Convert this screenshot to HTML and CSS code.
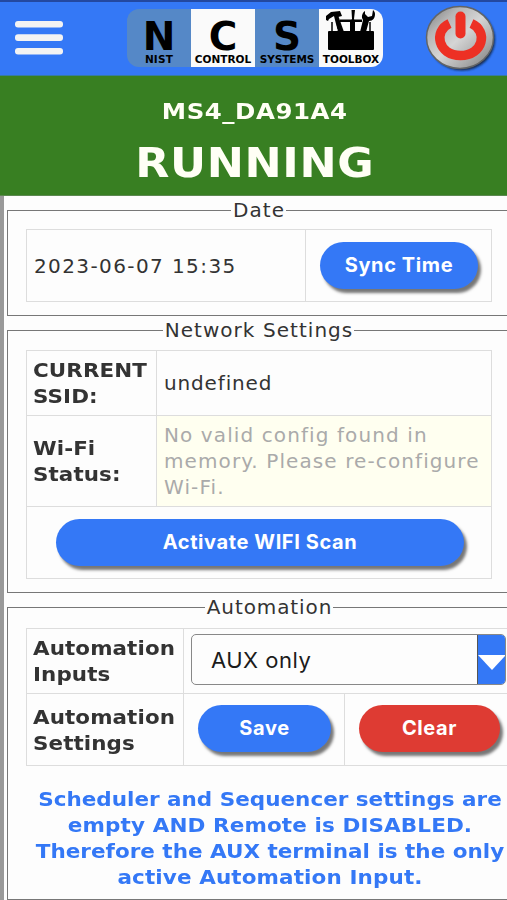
FILE: index.html
```html
<!DOCTYPE html>
<html lang="en">
<head>
<meta charset="utf-8">
<title>NCS Toolbox</title>
<link rel="stylesheet" href="styles.css">
</head>
<body>
<header class="topbar">
  <svg class="menu" width="48" height="34" viewBox="0 0 48 34" fill="#f3f3f3"><rect width="48" height="6.6" rx="3"/><rect y="13.3" width="48" height="6.6" rx="3"/><rect y="27" width="48" height="6.6" rx="3"/></svg>
  <div class="logo">
    <div class="tile"><b class="n">N</b><span class="nist">NIST</span></div>
    <div class="tile light"><b class="c">C</b><span class="control">CONTROL</span></div>
    <div class="tile"><b class="s">S</b><span class="systems">SYSTEMS</span></div>
    <div class="tile light">
      <svg class="tools" width="50" height="42" viewBox="0 0 50 42">
        <path d="M3 21h44q1 0 1 1v17q0 1-1 1H3q-1 0-1-1V22q0-1 1-1z"/>
        <path d="M6 22V12M44 22V12" stroke="#000" stroke-width="1.500"/>
        <path d="M14 9.500h22v2.500H14z"/>
        <path d="M8 6l4-1 6 17h-6z"/>
        <path d="M0 6l5-4 9-1 2 5-4 1-4-1-5 3-1 2-2-1z"/>
        <path d="M25.500 0h3.500l-1 9 1 3v10h-5V12l2-3z"/>
        <path d="M39 1c-3 2-4 6-2 9l-3 12h6l3-11c4 0 6-3 6-7 0-2-1-3-2-4l-1 6-4 1-3-3z"/>
        <path d="M11 20l-2.500-7M34.500 12l-2.500 8" stroke="#fafafa" stroke-width="1"/>
      </svg>
      <span class="toolbox">TOOLBOX</span>
    </div>
  </div>
  <svg class="power" width="74" height="68" viewBox="0 0 74 68">
    <defs><linearGradient id="metal" x1="0" y1="0" x2="1" y2="1"><stop offset="0" stop-color="#777"/><stop offset=".25" stop-color="#b5b5b5"/><stop offset=".5" stop-color="#d5d5d5"/><stop offset=".75" stop-color="#aaa"/><stop offset="1" stop-color="#777"/></linearGradient>
    <filter id="soft" x="-20%" y="-20%" width="140%" height="140%"><feGaussianBlur stdDeviation="1"/></filter></defs>
    <ellipse cx="37" cy="35.500" rx="33" ry="31" fill="#122c50" filter="url(#soft)"/>
    <ellipse cx="35" cy="33.500" rx="33.500" ry="31" fill="url(#metal)" stroke="#626466" stroke-width="1.500"/>
    <path d="M24.500 19.500C8 27 13 51.500 35.500 51.500s28-24.500 11-32" fill="none" stroke="#ed3024" stroke-width="9.500"/>
    <path d="M35.500 12.500v17" stroke="#ed3024" stroke-width="10" stroke-linecap="round"/>
  </svg>
</header>
<section class="status">
  <div class="device"><span class="wide">MS4_DA91A4</span></div>
  <div class="state"><span class="wide">RUNNING</span></div>
</section>
<main>
  <fieldset class="date">
    <legend>Date</legend>
    <table>
      <tr class="r-btn"><td class="w-date">2023-06-07 15:35</td><td class="act"><button class="sync">Sync Time</button></td></tr>
    </table>
  </fieldset>
  <fieldset class="network">
    <legend>Network Settings</legend>
    <table>
      <tr class="r-ssid"><th><span>CURRENT<br>SSID:</span></th><td class="ssid">undefined</td></tr>
      <tr class="r-wifi"><th><span>Wi-Fi<br>Status:</span></th><td class="notice">No valid config found in<br>memory. Please re-configure<br>Wi-Fi.</td></tr>
      <tr class="r-btn"><td colspan="2" class="act"><button class="scan">Activate WIFI Scan</button></td></tr>
    </table>
  </fieldset>
  <fieldset class="automation">
    <legend>Automation</legend>
    <table>
      <colgroup><col class="c-label"><col class="c-save"><col></colgroup>
      <tr class="r-ssid"><th><span>Automation<br>Inputs</span></th><td colspan="2" class="pick"><div class="select"><span>AUX only</span><i><svg width="28" height="15" viewBox="0 0 28 15"><path d="M0 0h28L14 15z" fill="#fff"/></svg></i></div></td></tr>
      <tr class="r-btn"><th><span>Automation<br>Settings</span></th><td class="act"><button class="save">Save</button></td><td class="act"><button class="clear">Clear</button></td></tr>
    </table>
    <p class="message">Scheduler and Sequencer settings are<br><span class="loose">empty AND Remote is DISABLED.</span><br>Therefore the AUX terminal is the only<br><span class="loose">active Automation Input.</span></p>
  </fieldset>
</main>
</body>
</html>
```
FILE: styles.css
```css
* { box-sizing: border-box; }
html { overflow: hidden; }
body { margin: 0; width: 507px; height: 900px; overflow: hidden; background: #fdfdfd; color: #333; font: 20px/26px "DejaVu Sans", sans-serif; letter-spacing: 1.4px; }
.topbar { height: 76px; background: #3478f6; border-top: 2px solid #2348a0; border-bottom: 1px solid #367ca0; display: flex; align-items: flex-start; }
.menu { margin: 19px 0 0 15px; flex: none; }
.logo { margin: 7px 0 0 64px; width: 256px; height: 58px; border-radius: 12px; overflow: hidden; display: flex; flex: none; }
.tile { width: 64px; background: #5588c7; color: #000; display: flex; flex-direction: column; align-items: center; font-weight: bold; letter-spacing: 0; }
.light { background: #fafafa; }
.tile b { font-size: 39px; line-height: 42px; height: 44px; padding-top: 7px; }
.tile span { font-size: 10.500px; line-height: 13px; white-space: nowrap; }
.tile .nist { letter-spacing: .2px; }
.tile .systems { letter-spacing: -.1px; }
.tools { height: 42px; margin: 1px 0; flex: none; }
.power { margin: 2px 0 0 42px; flex: none; }
.status { height: 120px; background: #387f22; color: #fffff5; font-weight: bold; text-align: center; padding: 21px 0 0 3px; border-bottom: 1px solid #5c8850; }
.wide { display: inline-block; transform: scaleX(1.11); }
.device { font-size: 22px; line-height: 30px; letter-spacing: .5px; }
.state { font-size: 40px; line-height: 52px; margin-top: 10px; letter-spacing: .6px; }
main { border-left: 4px solid #999; height: 704px; padding: 1px 0 0 3px; overflow: hidden; }
fieldset { width: 503px; margin: 0 0 1px; padding: 7px 18px 0 18px; border: 1px solid #777; min-width: 0; }
legend { margin: 0 auto; padding: 0 1px 0 2px; height: 26px; letter-spacing: 1.050px; }
.date { height: 119px; padding-top: 6px; }
.network { height: 276px; }
.automation { width: 506px; height: 306px; padding: 8px 0 0 18px; }
.automation legend { letter-spacing: .9px; }
table { width: 466px; border-collapse: collapse; table-layout: fixed; }
.automation table { width: 500px; }
th, td { border: 1px solid #ddd; padding: 0 7px; text-align: left; white-space: nowrap; }
th { width: 130px; letter-spacing: .1px; }
th span { display: inline-block; transform: scaleX(1.07); transform-origin: 0 50%; margin-left: -1px; }
.w-date { width: 279px; }
.c-label { width: 157px; }
.c-save { width: 161px; }
.r-btn { height: 72px; }
.r-ssid { height: 65px; }
.r-wifi { height: 91px; }
.ssid { letter-spacing: .85px; }
.notice { background: #fffff0; color: #aaa; letter-spacing: 1.100px; }
.act { padding: 0 0 0 14px; }
button { display: block; height: 47px; border: 0; border-radius: 24px; background: #3478f6; color: #fff; font: 700 20px/47px Inter, sans-serif; letter-spacing: .6px; padding: 0; box-shadow: 3px 4px 3px #777; }
.sync { width: 158px; }
.scan { width: 408px; margin-left: 15px; }
.save { width: 133px; }
.clear { width: 141px; background: #de3b33; }
.automation button { margin-bottom: 2px; }
.pick { padding: 0 7px 3px; }
.select { width: 315px; height: 51px; border: 1px solid #888; border-radius: 5px; display: flex; overflow: hidden; color: #1b1b1b; font: 22px/50px Inter, sans-serif; letter-spacing: .5px; }
.select span { width: 285px; padding-left: 19px; flex: none; }
.select i { width: 29px; background: #3478f6; border-left: 1px solid #555; display: flex; align-items: center; padding-top: 5px; }
.message { margin: 20px 0 0; width: 488px; text-align: center; color: #3478f6; font-weight: bold; white-space: nowrap; letter-spacing: 0; transform: scaleX(1.075); }
.loose { letter-spacing: .1px; }
```
